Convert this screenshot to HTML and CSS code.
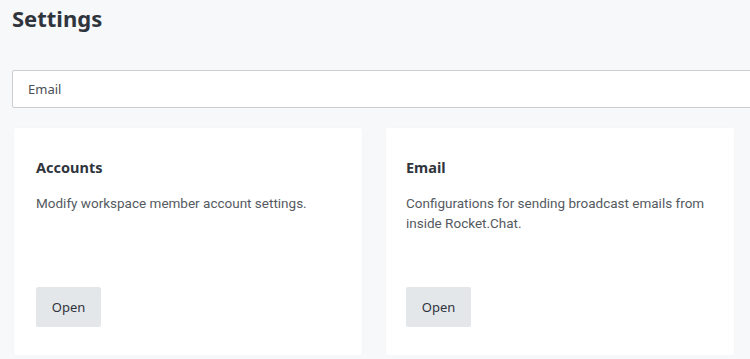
FILE: index.html
```html
<!DOCTYPE html>
<html>
<head>
<meta charset="utf-8">
<link rel="stylesheet" href="styles.css">
</head>
<body>
<div class="page">
  <h1 class="page-title">Settings</h1>
  <div class="search">
    <input class="search-input" type="text" value="Email">
  </div>
  <div class="cards">
    <div class="card">
      <h2 class="card-title">Accounts</h2>
      <p class="card-desc">Modify workspace member account settings.</p>
      <button class="btn">Open</button>
    </div>
    <div class="card card-right">
      <h2 class="card-title">Email</h2>
      <p class="card-desc">Configurations for sending broadcast emails from inside Rocket.Chat.</p>
      <button class="btn">Open</button>
    </div>
  </div>
</div>
</body>
</html>
```
FILE: styles.css
```css
html, body {
  margin: 0;
  padding: 0;
  background: #f7f8fa;
  font-family: "Noto Sans", "Open Sans", sans-serif;
  overflow: hidden;
}
.page {
  padding: 3px 0 0 12px;
  width: 780px;
}
.page-title {
  margin: 0;
  font-size: 22px;
  line-height: 30px;
  font-weight: 700;
  color: #2f343d;
}
.search {
  margin-top: 37px;
}
.search-input {
  box-sizing: border-box;
  width: 760px;
  height: 38px;
  border: 1px solid #cbced1;
  border-radius: 2px;
  background: #fff;
  padding: 0 15px;
  font-family: inherit;
  font-size: 13px;
  color: #4a4f57;
  outline: none;
}
.cards {
  display: flex;
  gap: 24px;
  margin-top: 20px;
  padding-left: 2px;
}
.card {
  box-sizing: border-box;
  width: 348px;
  height: 227px;
  background: #fff;
  border-radius: 2px;
  box-shadow: 0 0 2px rgba(0,0,0,0.04);
  padding: 29px 22px 0 22px;
  display: flex;
  flex-direction: column;
  align-items: flex-start;
}
.card-right {
  padding: 29px 20px 0 20px;
}
.card-title {
  margin: 0;
  font-size: 14.5px;
  line-height: 20px;
  font-weight: 700;
  color: #2f343d;
}
.card-desc {
  margin: 16px 0 0 0;
  font-family: Roboto, "Noto Sans", sans-serif;
  font-size: 13.5px;
  line-height: 20px;
  color: #555a61;
}
.btn {
  margin-top: auto;
  margin-bottom: 28px;
  width: 65px;
  height: 40px;
  border: none;
  border-radius: 2px;
  background: #e4e7ea;
  font-family: inherit;
  font-size: 13px;
  color: #2f343d;
  padding: 0;
}
```
